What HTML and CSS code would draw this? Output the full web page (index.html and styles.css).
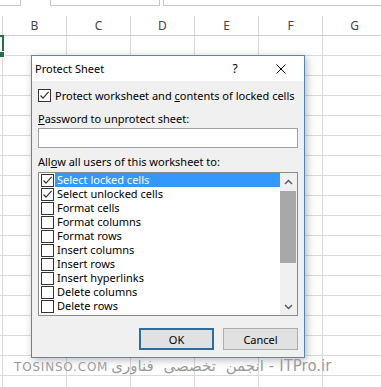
FILE: index.html
```
<!DOCTYPE html>
<html>
<head>
<meta charset="utf-8">
<title>Protect Sheet</title>
<link rel="stylesheet" href="styles.css">
</head>
<body>
<div class="app">
  <div class="topbar">
    <div class="tb tb-name"></div>
    <div class="tb tb-fx"></div>
    <div class="tb tb-formula"></div>
  </div>
  <div class="sheet">
    <div class="colhead">
      <div class="hc hc-a"></div>
      <div class="hc">B</div>
      <div class="hc">C</div>
      <div class="hc">D</div>
      <div class="hc">E</div>
      <div class="hc">F</div>
      <div class="hc">G</div>
    </div>
    <div class="cells"></div>
    <div class="sel"><span class="handle"></span></div>
  </div>

  <div class="dialog">
    <div class="titlebar">
      <span class="title">Protect Sheet</span>
      <span class="tbtn tbtn-help">?</span>
      <span class="tbtn tbtn-close">
        <svg width="10" height="10" viewBox="0 0 10 10"><path d="M0.5 0.5 L9.5 9.5 M9.5 0.5 L0.5 9.5" stroke="#000" stroke-width="1" fill="none"/></svg>
      </span>
    </div>
    <div class="body">
      <div class="opt-row">
        <span class="cb checked"><svg width="11" height="11" viewBox="0 0 11 11"><path d="M1.5 5.5 L4 8.2 L9.6 1.8" stroke="#333" stroke-width="1.2" fill="none"/></svg></span>
        <span class="opt-text">Protect worksheet and <u>c</u>ontents of locked cells</span>
      </div>
      <div class="field-label"><u>P</u>assword to unprotect sheet:</div>
      <div class="pw-input"></div>
      <div class="allow-label">All<u>o</u>w all users of this worksheet to:</div>
      <div class="listbox">
        <div class="items">
          <div class="item"><span class="cb checked"><svg width="11" height="11" viewBox="0 0 11 11"><path d="M1.5 5.5 L4 8.2 L9.6 1.8" stroke="#333" stroke-width="1.2" fill="none"/></svg></span><span class="item-text selected">Select locked cells</span></div>
          <div class="item"><span class="cb checked"><svg width="11" height="11" viewBox="0 0 11 11"><path d="M1.5 5.5 L4 8.2 L9.6 1.8" stroke="#333" stroke-width="1.2" fill="none"/></svg></span><span class="item-text">Select unlocked cells</span></div>
          <div class="item"><span class="cb"></span><span class="item-text">Format cells</span></div>
          <div class="item"><span class="cb"></span><span class="item-text">Format columns</span></div>
          <div class="item"><span class="cb"></span><span class="item-text">Format rows</span></div>
          <div class="item"><span class="cb"></span><span class="item-text">Insert columns</span></div>
          <div class="item"><span class="cb"></span><span class="item-text">Insert rows</span></div>
          <div class="item"><span class="cb"></span><span class="item-text">Insert hyperlinks</span></div>
          <div class="item"><span class="cb"></span><span class="item-text">Delete columns</span></div>
          <div class="item"><span class="cb"></span><span class="item-text">Delete rows</span></div>
        </div>
        <div class="scroll">
          <div class="sb-btn"><svg width="9" height="6" viewBox="0 0 9 6"><path d="M1 5 L4.5 1.5 L8 5" stroke="#555" stroke-width="1.4" fill="none"/></svg></div>
          <div class="sb-track"><div class="sb-thumb"></div></div>
          <div class="sb-btn"><svg width="9" height="6" viewBox="0 0 9 6"><path d="M1 1 L4.5 4.5 L8 1" stroke="#555" stroke-width="1.4" fill="none"/></svg></div>
        </div>
      </div>
      <div class="buttons">
        <button class="btn btn-default">OK</button>
        <button class="btn">Cancel</button>
      </div>
    </div>
  </div>

  <div class="watermark">
    <span class="wm-latin wm-site">TOSINSO.COM</span>
    <span class="wm-fa" dir="rtl">انجمن تخصصی فناوری</span>
    <span class="wm-latin wm-dash">-</span>
    <span class="wm-latin wm-big">ITPro.ir</span>
  </div>
</div>
</body>
</html>
```
FILE: styles.css
```
html, body {
  margin: 0;
  padding: 0;
  background: #fff;
}
body {
  font-family: "Noto Sans", "Open Sans", sans-serif;
  font-size: 11px;
  color: #000;
  overflow: hidden;
}
.app {
  position: relative;
  width: 381px;
  height: 387px;
  overflow: hidden;
}

/* formula bar remnants */
.topbar {
  display: flex;
  height: 6px;
  margin-bottom: 10px;
}
.tb {
  box-sizing: border-box;
  height: 6px;
  border-bottom: 1px solid #c6c6c6;
}
.tb-name {
  width: 21px;
  border-right: 1px solid #c6c6c6;
}
.tb-fx {
  margin-left: 29px;
  width: 110px;
  border-left: 1px solid #c6c6c6;
  border-right: 1px solid #c6c6c6;
}
.tb-formula {
  margin-left: 3px;
  flex: 1;
  border-left: 1px solid #c6c6c6;
}

/* sheet */
.sheet {
  position: relative;
}
.colhead {
  display: flex;
  height: 20px;
  box-sizing: border-box;
  border-bottom: 1px solid #cfcfcf;
}
.hc {
  box-sizing: border-box;
  width: 64px;
  flex: none;
  border-right: 1px solid #d6d6d6;
  text-align: center;
  font-size: 12px;
  line-height: 19px;
  color: #444;
}
.hc-a {
  width: 3px;
}
.cells {
  height: 360px;
  background-image:
    linear-gradient(to right, transparent 2px, #dadada 2px, #dadada 3px, transparent 3px),
    linear-gradient(to bottom, transparent 19px, #dadada 19px);
  background-size: 64px 100%, 100% 20px;
}
.sel {
  position: absolute;
  left: -4px;
  top: 19px;
  width: 8px;
  height: 21px;
  box-sizing: border-box;
  border: 2px solid #217346;
}
.handle {
  position: absolute;
  right: -3px;
  bottom: -4px;
  width: 5px;
  height: 5px;
  background: #217346;
  border: 1px solid #fff;
}

/* dialog */
.dialog {
  position: absolute;
  left: 31px;
  top: 55px;
  width: 274px;
  box-sizing: border-box;
  border: 1px solid #4f87c2;
  background: #f0f0f0;
  box-shadow: 2px 2px 8px rgba(0, 0, 0, 0.28);
}
.titlebar {
  display: flex;
  align-items: center;
  height: 25px;
  background: #fff;
}
.title {
  flex: 1;
  padding-left: 3px;
  line-height: 15px;
}
.tbtn {
  display: flex;
  align-items: center;
  justify-content: center;
  height: 25px;
}
.tbtn-help {
  width: 30px;
  margin-right: 8px;
  font-size: 12px;
}
.tbtn-close {
  width: 46px;
}
.body {
  padding: 0 6px 7px;
}
.opt-row {
  display: flex;
  align-items: center;
  height: 13px;
  margin-top: 8px;
}
.opt-text {
  margin-left: 4px;
  line-height: 15px;
  white-space: nowrap;
}
.cb {
  box-sizing: border-box;
  flex: none;
  width: 13px;
  height: 13px;
  border: 1px solid #333;
  background: #fff;
  display: flex;
  align-items: center;
  justify-content: center;
}
.field-label {
  margin-top: 9px;
  line-height: 15px;
}
.pw-input {
  margin-top: 2px;
  height: 20px;
  box-sizing: border-box;
  border: 1px solid #a3a3a3;
  background: #fff;
}
.allow-label {
  margin-top: 6px;
  line-height: 15px;
}
.listbox {
  margin-top: 3px;
  height: 144px;
  box-sizing: border-box;
  border: 1px solid #8a8a8a;
  background: #fff;
  display: flex;
}
.items {
  flex: 1;
  overflow: hidden;
}
.item {
  display: flex;
  align-items: center;
  height: 14px;
}
.item .cb {
  margin-left: 2px;
}
.item-text {
  flex: 1;
  margin-left: 1px;
  padding-left: 2px;
  line-height: 14px;
  white-space: nowrap;
}
.item-text.selected {
  background: #3399ff;
  color: #fff;
}
.scroll {
  width: 17px;
  flex: none;
  background: #f0f0f0;
  display: flex;
  flex-direction: column;
}
.sb-btn {
  height: 17px;
  display: flex;
  align-items: center;
  justify-content: center;
}
.sb-track {
  flex: 1;
  padding: 1px 1px 0 0;
}
.sb-thumb {
  height: 72px;
  background: #a8a8a8;
}
.buttons {
  display: flex;
  justify-content: flex-end;
  gap: 9px;
  margin-top: 12px;
}
.btn {
  width: 75px;
  height: 22px;
  box-sizing: border-box;
  margin: 0;
  padding: 0;
  font-family: "Noto Sans", "Open Sans", sans-serif;
  font-size: 11px;
  color: #000;
  background: #e1e1e1;
  border: 1px solid #adadad;
}
.btn-default {
  border: 2px solid #2c6ea3;
}

/* watermark */
.watermark {
  position: absolute;
  left: 14px;
  top: 357px;
  display: flex;
  align-items: baseline;
  color: #9a9a9a;
  text-shadow: 0 0 1px #fff;
  white-space: nowrap;
}
.wm-latin {
  font-family: "DejaVu Sans", sans-serif;
}
.wm-site {
  font-size: 12px;
  letter-spacing: 0.8px;
}
.wm-fa {
  font-family: "DejaVu Sans", sans-serif;
  font-size: 15px;
  margin-left: 3px;
  word-spacing: 5px;
}
.wm-dash {
  font-size: 15px;
  margin-left: 5px;
}
.wm-big {
  font-size: 15px;
  letter-spacing: 0;
  margin-left: 5px;
}
```
